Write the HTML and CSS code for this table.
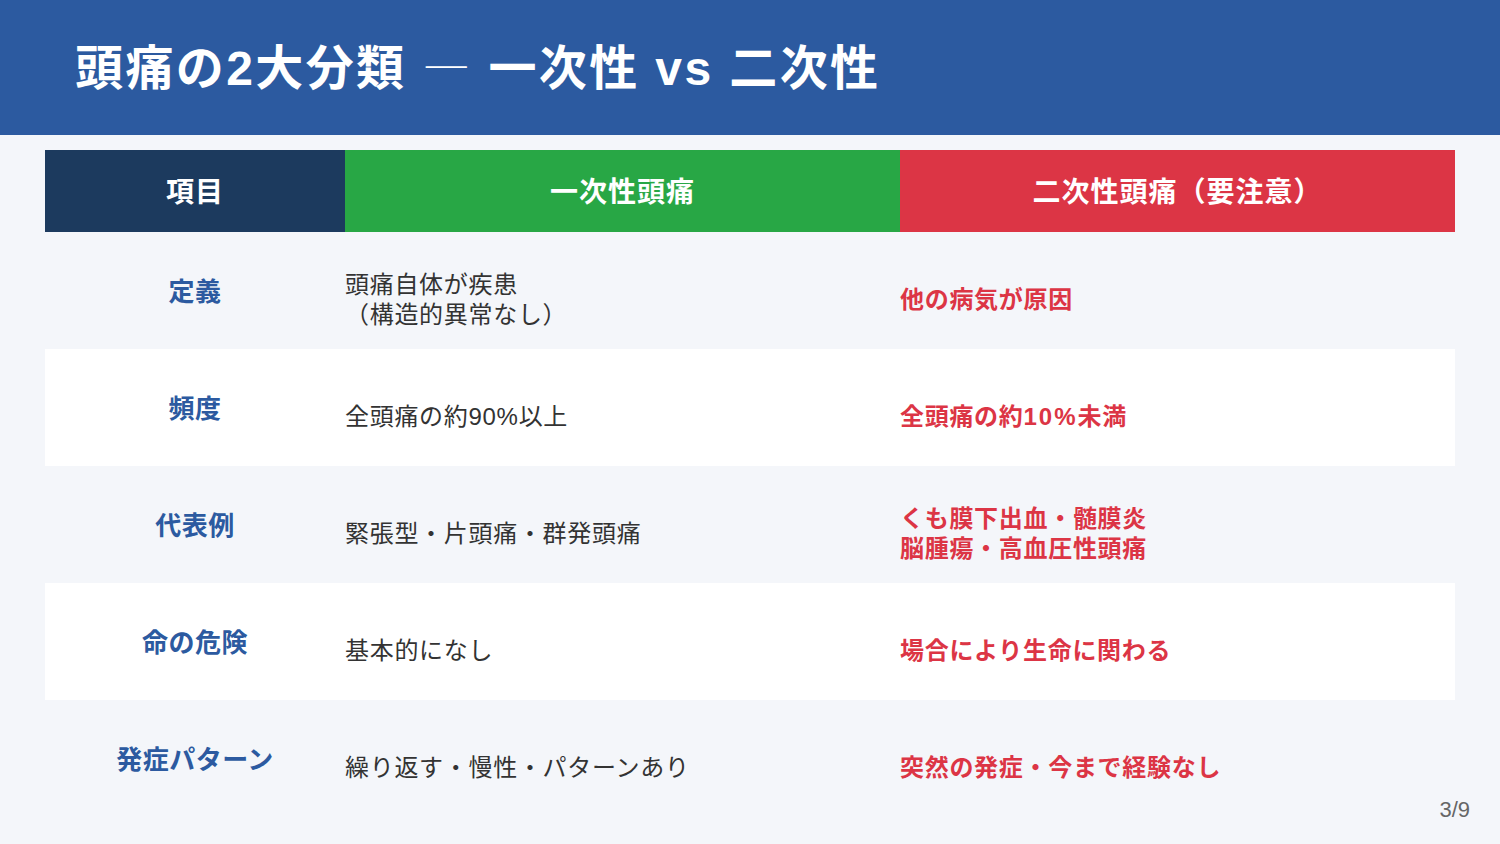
FILE: index.html
```html
<!DOCTYPE html>
<html lang="ja">
<head>
<meta charset="utf-8">
<title>頭痛の2大分類</title>
<link rel="stylesheet" href="styles.css">
</head>
<body>
<div class="slide">
  <header class="top">
    <h1 class="title">頭痛の2大分類 <span class="dash">—</span> 一次性 vs 二次性</h1>
  </header>
  <div class="table">
    <div class="row head">
      <div class="cell h-item">項目</div>
      <div class="cell h-primary">一次性頭痛</div>
      <div class="cell h-secondary">二次性頭痛（要注意）</div>
    </div>
    <div class="row">
      <div class="cell label">定義</div>
      <div class="cell primary">頭痛自体が疾患<br>（構造的異常なし）</div>
      <div class="cell secondary">他の病気が原因</div>
    </div>
    <div class="row alt">
      <div class="cell label">頻度</div>
      <div class="cell primary">全頭痛の約90%以上</div>
      <div class="cell secondary">全頭痛の約<span class="num">10%</span>未満</div>
    </div>
    <div class="row">
      <div class="cell label">代表例</div>
      <div class="cell primary">緊張型・片頭痛・群発頭痛</div>
      <div class="cell secondary">くも膜下出血・髄膜炎<br>脳腫瘍・高血圧性頭痛</div>
    </div>
    <div class="row alt">
      <div class="cell label">命の危険</div>
      <div class="cell primary">基本的になし</div>
      <div class="cell secondary">場合により生命に関わる</div>
    </div>
    <div class="row">
      <div class="cell label">発症パターン</div>
      <div class="cell primary">繰り返す・慢性・パターンあり</div>
      <div class="cell secondary">突然の発症・今まで経験なし</div>
    </div>
  </div>
  <div class="page">3/9</div>
</div>
</body>
</html>
```
FILE: styles.css
```css
* { box-sizing: border-box; }
html, body {
  margin: 0;
  padding: 0;
}
body {
  width: 1500px;
  height: 844px;
  overflow: hidden;
  background: #f4f6fa;
  font-family: "Liberation Sans", "Noto Sans CJK JP", sans-serif;
}
.slide {
  position: relative;
  width: 1500px;
  height: 844px;
  display: flex;
  flex-direction: column;
}
.top {
  height: 135px;
  background: #2c5aa0;
  display: flex;
  align-items: center;
  padding: 0 75px;
}
.title {
  margin: 0;
  color: #fff;
  font-size: 48px;
  font-weight: 700;
  letter-spacing: 2.4px;
  line-height: 1;
  padding-bottom: 2px;
}
.dash {
  font-family: "Noto Sans CJK JP", sans-serif;
  font-weight: 300;
}
.table {
  margin: 15px 45px 0;
  display: flex;
  flex-direction: column;
}
.row {
  display: grid;
  grid-template-columns: 300px 555px 555px;
  height: 117px;
}
.row.alt { background: #fff; }
.row.head { height: 82px; }
.cell {
  display: flex;
  align-items: center;
}
.head .cell {
  justify-content: center;
  color: #fff;
  font-size: 28px;
  font-weight: 700;
  letter-spacing: 1px;
  padding-bottom: 2px;
}
.h-item { background: #1c3a5e; }
.h-primary { background: #28a745; }
.h-secondary { background: #dc3545; }
.label {
  justify-content: center;
  color: #2c5aa0;
  font-size: 26px;
  font-weight: 700;
  letter-spacing: 0.5px;
  padding-bottom: 2px;
}
.primary, .secondary {
  font-size: 24px;
  line-height: 30px;
  letter-spacing: 0.7px;
  padding-top: 18px;
}
.primary { color: #333; }
.secondary { color: #dc3545; font-weight: 700; }
.num { letter-spacing: 2px; }
.page {
  position: absolute;
  right: 30px;
  bottom: 21px;
  font-size: 22px;
  color: #666;
}
```
